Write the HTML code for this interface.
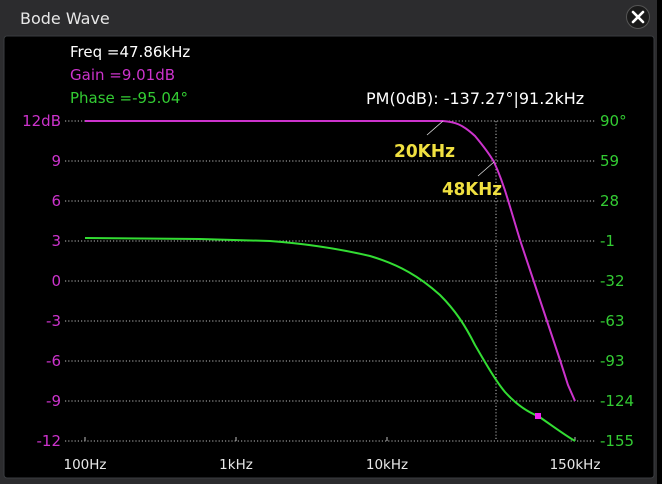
<!DOCTYPE html>
<html><head><meta charset="utf-8"><style>
body{margin:0;width:662px;height:484px;background:#000;overflow:hidden;font-family:"DejaVu Sans","Liberation Sans",sans-serif}
</style></head><body>
<svg width="662" height="484" xmlns="http://www.w3.org/2000/svg" style="position:absolute;left:0;top:0">
<rect x="0" y="0" width="657" height="484" fill="#2c2c2e"/>
<rect x="4" y="36" width="650" height="442" rx="3" fill="#000" stroke="#3a3d40" stroke-width="1"/>
<text x="20" y="24" fill="#e8e8e8" font-size="16">Bode Wave</text>
<circle cx="638" cy="17" r="11.5" fill="#1a1a1a" stroke="#555" stroke-width="1"/>
<path d="M633 12 L643 22 M643 12 L633 22" stroke="#fff" stroke-width="2.6" stroke-linecap="round"/>
<g stroke="#bbb" stroke-width="1" stroke-dasharray="1.2 2" fill="none">
<path d="M65 121H595M65 161H595M65 201H595M65 241H595M65 281H595M65 321H595M65 361H595M65 401H595M65 441H595M496 121V441"/>
</g>
<g stroke="#bbb" stroke-width="1"><path d="M85 441v-4M236 441v-4M387 441v-4M575 441v-4"/></g>
<g font-size="15" fill="#cc33cc" text-anchor="end">
<text x="61" y="126">12dB</text><text x="61" y="166">9</text><text x="61" y="206">6</text><text x="61" y="246">3</text><text x="61" y="286">0</text><text x="61" y="326">-3</text><text x="61" y="366">-6</text><text x="61" y="406">-9</text><text x="61" y="446">-12</text>
</g>
<g font-size="15" fill="#33cc33">
<text x="600" y="126">90°</text><text x="600" y="166">59</text><text x="600" y="206">28</text><text x="600" y="246">-1</text><text x="600" y="286">-32</text><text x="600" y="326">-63</text><text x="600" y="366">-93</text><text x="600" y="406">-124</text><text x="600" y="446">-155</text>
</g>
<g font-size="13.5" fill="#e8e8e8" text-anchor="middle">
<text x="85" y="469">100Hz</text><text x="236" y="469">1kHz</text><text x="387" y="469">10kHz</text><text x="575" y="469">150kHz</text>
</g>
<text x="70" y="57" font-size="15" fill="#fff">Freq =47.86kHz</text>
<text x="70" y="80" font-size="15" fill="#cc33cc">Gain =9.01dB</text>
<text x="70" y="103" font-size="15" fill="#33cc33">Phase =-95.04°</text>
<text x="366" y="104" font-size="16" fill="#fff">PM(0dB):  -137.27°|91.2kHz</text>
<path d="M85 121 L443 121 C455 122 462 124 475 136 C485 148 490 155 494 162 C500 175 505 190 508 200 L520 240 L530 270 L540 300 L550 330 L560 360 L568 385 L575 401" stroke="#cc33cc" stroke-width="2" fill="none"/>
<path d="M85 238 L200 239 L270 241 C310 244 340 249 370 256 C400 265 420 277 440 295 C455 310 465 325 475 345 C485 362 495 380 505 392 C515 403 525 411 538 416 C550 424 563 434 575 441" stroke="#33dd33" stroke-width="2" fill="none"/>
<rect x="535" y="413" width="6" height="6" fill="#ee22ee"/>
<path d="M443 121 L427 135 M494 162 L478 176" stroke="#ddd" stroke-width="0.8"/>
<text x="394" y="157" font-size="18" font-weight="bold" fill="#f0e040" textLength="61" lengthAdjust="spacingAndGlyphs">20KHz</text>
<text x="442" y="195" font-size="18" font-weight="bold" fill="#f0e040" textLength="60" lengthAdjust="spacingAndGlyphs">48KHz</text>
</svg>
</body></html>
